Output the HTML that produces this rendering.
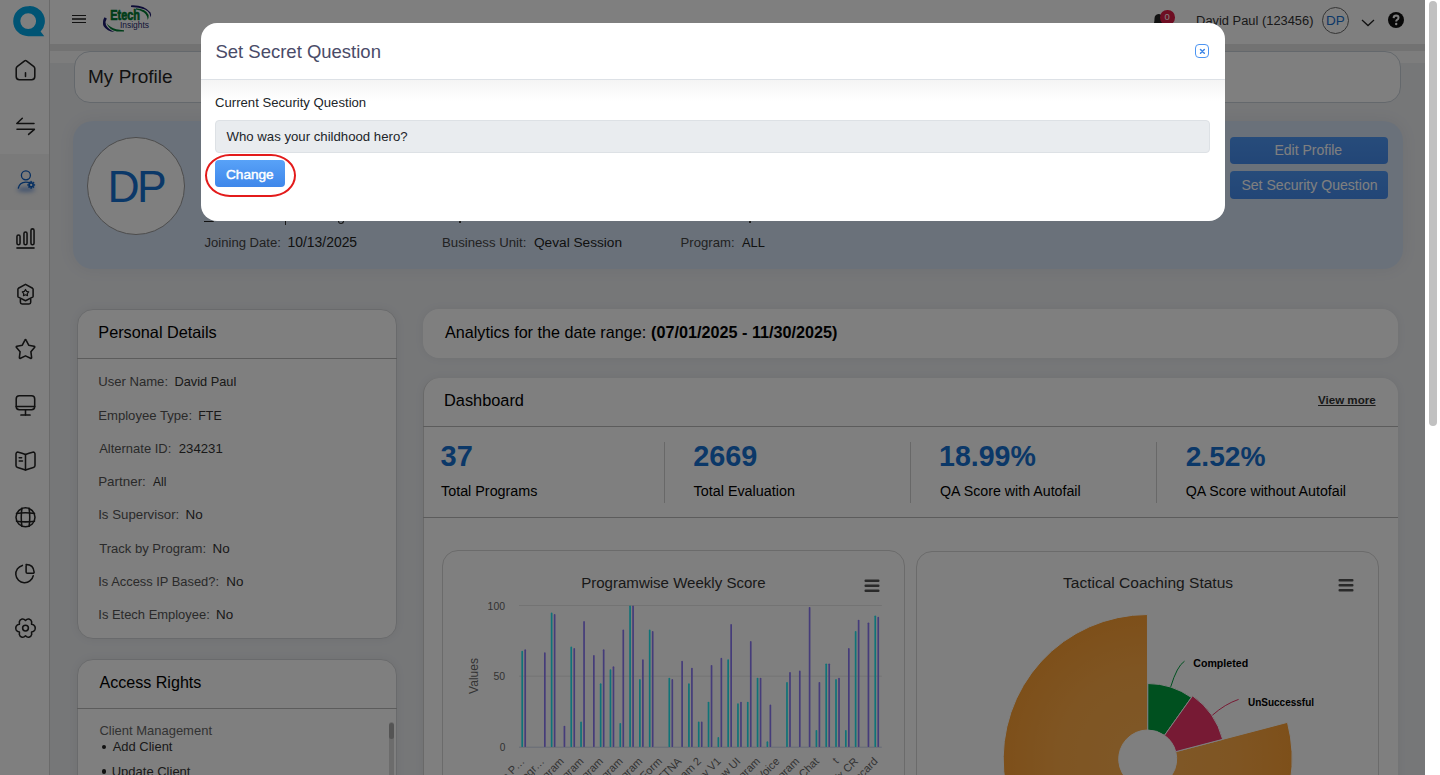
<!DOCTYPE html>
<html><head><meta charset="utf-8">
<style>
*{box-sizing:border-box;margin:0;padding:0}
html,body{width:1440px;height:775px;overflow:hidden}
body{position:relative;font-family:"Liberation Sans",sans-serif;background:#eceef1;color:#222}
.t{position:absolute;white-space:nowrap}
.a{position:absolute}
#side{position:absolute;left:0;top:0;width:50px;height:775px;background:#fff;border-right:1px solid #d4d4d4;z-index:5}
#hdr{position:absolute;left:50px;top:0;width:1375px;height:44px;background:#fff;z-index:4}
#hshadow{position:absolute;left:50px;top:44px;width:1375px;height:7px;background:#e5e5e5;z-index:3}
#band{position:absolute;left:50px;top:51px;width:1375px;height:12px;background:#fbfbfb;z-index:1}
#sb{position:absolute;left:1425px;top:0;width:15px;height:775px;background:#fff;z-index:50}
#sbthumb{position:absolute;left:1429px;top:1px;width:8px;height:425px;background:#c1c1c1;border-radius:4px;z-index:51}
.card{position:absolute;background:#fff;border-radius:16px;box-shadow:0 0 10px rgba(0,0,0,0.06);z-index:2}
.card.bd{border:1px solid #d2d6da}
#overlay{position:absolute;left:0;top:0;width:1425px;height:775px;background:rgba(0,0,0,0.5);z-index:40}
#modal{position:absolute;left:201px;top:23px;width:1024px;height:198px;background:#fff;border-radius:16px;z-index:60;overflow:hidden}
.ico{position:absolute;left:10px;width:30px;height:30px;z-index:6}
.ico *{fill:none;stroke:#222;stroke-width:1.55;stroke-linecap:round;stroke-linejoin:round}
.sep{position:absolute;width:1px;background:#d0d0d0;z-index:3}
.t{z-index:8}
</style></head><body>
<div id="side">
 <div class="a" style="left:0;top:154px;width:49px;height:56px;background:#f4f4f4"></div>
</div>
<!-- Q logo -->
<svg class="a" style="left:12px;top:5px;z-index:6" width="34" height="33" viewBox="0 0 34 33">
 <path d="M16.2 1.2 A15 15 0 1 0 16.2 31.2 L32.3 31.3 L28.6 26.6 A15 15 0 0 0 16.2 1.2 Z M16.2 8.2 A7.9 7.9 0 1 1 16.2 24.0 A7.9 7.9 0 1 1 16.2 8.2 Z" fill="#00a8e8" fill-rule="evenodd"/>
</svg>
<!-- home -->
<svg class="ico" style="top:55px" viewBox="0 0 30 30">
 <path d="M14.6 5.9 L7.4 11.3 Q6.2 12.2 6.2 13.6 V21.6 Q6.2 24.8 9.4 24.8 H21.6 Q24.8 24.8 24.8 21.6 V13.6 Q24.8 12.2 23.6 11.3 L16.4 5.9 Q15.5 5.2 14.6 5.9 Z"/>
 <path d="M15.5 17.7 V21.5"/>
</svg>
<!-- arrows -->
<svg class="ico" style="top:111px" viewBox="0 0 30 30">
 <path d="M24 12.5 H6.8 L12.3 7.2"/>
 <path d="M7 18.3 H24.4 L18.6 23.4"/>
</svg>
<!-- user gear active -->
<div class="a" style="left:17px;top:186.5px;width:18px;height:5.5px;border-radius:50%;background:rgba(20,90,200,0.5);filter:blur(2px);z-index:6"></div>
<svg class="ico" style="top:165px" viewBox="0 0 30 30">
 <circle cx="15.9" cy="10.3" r="4.5" style="stroke:#0a5cc0;stroke-width:1.3"/>
 <path d="M8.3 23.2 Q9.5 17.2 15.8 17.1 Q18.5 17.1 20.3 18" style="stroke:#0a5cc0;stroke-width:1.3"/>
 <path d="M20.49 16.27 L21.91 16.27 L21.93 17.51 L22.37 17.69 L23.27 16.83 L24.27 17.83 L23.41 18.73 L23.59 19.17 L24.83 19.19 L24.83 20.61 L23.59 20.63 L23.41 21.07 L24.27 21.97 L23.27 22.97 L22.37 22.11 L21.93 22.29 L21.91 23.53 L20.49 23.53 L20.47 22.29 L20.03 22.11 L19.13 22.97 L18.13 21.97 L18.99 21.07 L18.81 20.63 L17.57 20.61 L17.57 19.19 L18.81 19.17 L18.99 18.73 L18.13 17.83 L19.13 16.83 L20.03 17.69 L20.47 17.51 Z" style="fill:#0a5cc0;stroke:#0a5cc0;stroke-width:0.4"/>
 <circle cx="21.2" cy="19.9" r="1.15" style="fill:#f4f4f4;stroke:none"/>
</svg>
<!-- bar chart -->
<svg class="ico" style="top:224px" viewBox="0 0 30 30">
 <rect x="6.95" y="11.05" width="3.1" height="9.7" rx="1.55"/>
 <rect x="13.95" y="7.95" width="3.1" height="12.8" rx="1.55"/>
 <rect x="20.95" y="4.85" width="3.1" height="15.9" rx="1.55"/>
 <path d="M6.4 24 H24.6" style="stroke-width:1.7;stroke-linecap:butt"/>
</svg>
<!-- badge/webcam -->
<svg class="ico" style="top:279px" viewBox="0 0 30 30">
 <path d="M15.5 5.4 L22.6 9.3 Q23.1 9.6 23.1 10.2 V17.2 Q23.1 17.8 22.6 18.1 L15.5 21.8 L8.4 18.1 Q7.9 17.8 7.9 17.2 V10.2 Q7.9 9.6 8.4 9.3 Z"/>
 <path d="M10.4 20.3 V23.2 Q10.4 24.9 12.1 24.9 H19 Q20.7 24.9 20.7 23.2 V20.3"/>
 <path d="M15.50 10.50 L16.62 12.36 L18.73 12.85 L17.31 14.49 L17.50 16.65 L15.50 15.80 L13.50 16.65 L13.69 14.49 L12.27 12.85 L14.38 12.36 Z" style="stroke-width:1.2"/>
</svg>
<!-- star -->
<svg class="ico" style="top:334px" viewBox="0 0 30 30">
 <path d="M15.5 5.6 Q15.9 5.6 16.2 6.3 L18.7 11.2 L24 12.2 Q25.3 12.5 24.5 13.6 L20.9 17.7 L21.6 23.3 Q21.8 24.8 20.5 24.2 L15.5 21.9 L10.5 24.2 Q9.2 24.8 9.4 23.3 L10.1 17.7 L6.5 13.6 Q5.7 12.5 7 12.2 L12.3 11.2 L14.8 6.3 Q15.1 5.6 15.5 5.6 Z"/>
</svg>
<!-- monitor -->
<svg class="ico" style="top:390px" viewBox="0 0 30 30">
 <rect x="6.2" y="5.7" width="18.5" height="14.1" rx="3.2"/>
 <path d="M6.2 16.4 H24.7"/>
 <path d="M15.5 19.9 V24.9"/>
 <path d="M11 25 H20" style="stroke-width:1.7"/>
</svg>
<!-- book -->
<svg class="ico" style="top:446px" viewBox="0 0 30 30">
 <path d="M15.5 8.5 Q12 6.9 8.4 6.2 Q6 5.8 6 8.3 V19.6 Q6 21 7.6 21.4 Q11.8 22.4 15.5 24 Q19.2 22.4 23.4 21.4 Q25 21 25 19.6 V8.3 Q25 5.8 22.6 6.2 Q19 6.9 15.5 8.5 Z"/>
 <path d="M15.5 8.6 V23.9"/>
 <path d="M9.2 11.8 H11.6"/>
 <path d="M9.2 14.9 H12.5"/>
</svg>
<!-- globe -->
<svg class="ico" style="top:502px" viewBox="0 0 30 30">
 <circle cx="15.5" cy="15.3" r="9.5"/>
 <path d="M11.9 6.3 Q10.6 15.3 11.9 24.3"/>
 <path d="M19.1 6.3 Q20.4 15.3 19.1 24.3"/>
 <path d="M6.5 11.6 Q15.5 10 24.5 11.6"/>
 <path d="M6.5 19.2 Q15.5 20.6 24.5 19.2"/>
</svg>
<!-- pie -->
<svg class="ico" style="top:558px" viewBox="0 0 30 30">
 <path d="M12.4 7.4 A8.8 8.8 0 1 0 23.2 17.8"/>
 <path d="M16.1 6.4 Q23.6 6.4 24.1 14 Q24.2 15.3 22.8 15.3 H17.4 Q16.1 15.3 16.1 14 V7.7 Q16.1 6.4 17.1 6.4 Z"/>
</svg>
<!-- gear -->
<svg class="ico" style="top:613px" viewBox="0 0 30 30">
 <path d="M15.5 7.4 Q17.1 5.6 18.9 6 Q21.3 6.7 21.7 8.9 Q21.4 10.9 21.6 11.3 Q23.9 11.4 24.9 13.4 Q25.6 15.1 24.9 16.8 Q23.9 18.8 21.6 18.9 Q21.4 19.3 21.7 21.3 Q21.3 23.5 18.9 24.2 Q17.1 24.6 15.5 22.8 Q13.9 24.6 12.1 24.2 Q9.7 23.5 9.3 21.3 Q9.6 19.3 9.4 18.9 Q7.1 18.8 6.1 16.8 Q5.4 15.1 6.1 13.4 Q7.1 11.4 9.4 11.3 Q9.6 10.9 9.3 8.9 Q9.7 6.7 12.1 6 Q13.9 5.6 15.5 7.4 Z"/>
 <circle cx="15.5" cy="15.1" r="2.9"/>
</svg>
<div id="hdr"></div>
<div id="hshadow"></div>
<div id="band"></div>
<!-- hamburger -->
<div class="a" style="left:72px;top:14.8px;width:14px;height:1.2px;background:#222;z-index:6"></div>
<div class="a" style="left:72px;top:18.4px;width:14px;height:1.2px;background:#555;z-index:6"></div>
<div class="a" style="left:72px;top:22px;width:14px;height:1.2px;background:#222;z-index:6"></div>
<!-- Etech logo -->
<svg class="a" style="left:100px;top:3px;z-index:6" width="56" height="30" viewBox="0 0 56 30">
 <path d="M31 2.4 Q44 1.8 50.5 9.5 Q52 12 50.2 14.5 Q51 10 45 6.5 Q39 4 31 4 Z" fill="#1b1a6e"/>
 <path d="M36 5.3 Q46 6 48.6 12 Q49 15 47.5 17 Q48 13 44 9.5 Q40 7 36 6.4 Z" fill="#007a32"/>
 <path d="M4.5 14.2 Q2 18 3.5 23 Q7 28.5 14.5 29 Q8 26 6 22 Q4.8 18.5 6.8 15.5 Z" fill="#1b1a6e"/>
 <path d="M6.5 20 Q9 27 17 28.6 L24 28.6 L24 27.2 Q15 26.8 11 24 Q8 22.5 6.5 20 Z" fill="#007a32"/>
 <text x="10.2" y="17.4" font-family="Liberation Sans" font-weight="700" font-size="14" fill="#007a32" stroke="#007a32" stroke-width="0.7" textLength="29.8" lengthAdjust="spacingAndGlyphs">Etech</text>
 <text x="20" y="25" font-family="Liberation Sans" font-size="8.2" fill="#26266e" textLength="29" lengthAdjust="spacingAndGlyphs">Insights</text>
</svg>
<!-- bell + badge -->
<svg class="a" style="left:1151px;top:10px;z-index:6" width="16" height="16" viewBox="0 0 16 16">
 <path d="M3 13 Q3.5 11.5 3.5 8.5 Q3.5 4.5 7.5 4 Q11 4.2 11.5 8.5 Q11.5 11.5 12 13 Z" fill="#222"/>
 <circle cx="7.5" cy="14.3" r="1.4" fill="#222"/>
</svg>
<div class="a" style="left:1160px;top:10px;width:14.5px;height:14.5px;border-radius:50%;background:#dc1c46;z-index:7"></div>
<div class="t" style="left:1160px;top:10.5px;width:14.5px;text-align:center;font-size:9.5px;line-height:11px;color:#fff;z-index:8">0</div>
<!-- avatar -->
<div class="a" style="left:1322px;top:7px;width:27px;height:27px;border-radius:50%;border:1px solid #6a6a6a;z-index:6"></div>
<!-- chevron -->
<svg class="a" style="left:1361px;top:15px;z-index:6" width="14" height="12" viewBox="0 0 14 12">
 <path d="M1 5 L7 10.5 L13 5" fill="none" stroke="#222" stroke-width="1.3"/>
</svg>
<!-- help -->
<svg class="a" style="left:1388px;top:12px;z-index:6" width="16" height="16" viewBox="0 0 16 16">
 <circle cx="8" cy="8" r="8" fill="#111"/>
 <path d="M5.6 6.1 Q5.7 3.6 8.1 3.6 Q10.5 3.7 10.5 5.8 Q10.5 7.2 9 7.9 Q8.2 8.3 8.2 9.4" fill="none" stroke="#fff" stroke-width="2"/>
 <circle cx="8.2" cy="12" r="1.2" fill="#fff"/>
</svg>
<!-- my profile card -->
<div class="card bd" style="left:74px;top:51px;width:1327px;height:51.5px;box-shadow:none;border-color:#c8d0d8"></div>
<!-- profile card -->
<div class="card" style="left:73px;top:121px;width:1329.5px;height:147.5px;border-radius:20px;background:#d5e2f5;box-shadow:0 0 16px rgba(20,40,80,0.07)"></div>
<div class="a" style="left:87.4px;top:137.4px;width:98px;height:98px;border-radius:50%;background:#fff;border:1px solid #999;z-index:3"></div>
<!-- hidden name line peeking under modal -->
<div class="a" style="left:204px;top:220.5px;width:10px;height:1.6px;background:#222;border-radius:0 0 4px 0;z-index:3"></div>
<div class="a" style="left:284.5px;top:220.5px;width:1.6px;height:4px;background:#333;z-index:3"></div>
<div class="a" style="left:338px;top:220.5px;width:6px;height:3px;border:1.5px solid #333;border-top:none;border-radius:0 0 3px 3px;z-index:3"></div>
<div class="a" style="left:459px;top:220.5px;width:1.5px;height:2px;background:#444;z-index:3"></div>
<div class="a" style="left:749px;top:220.5px;width:1.5px;height:2px;background:#444;z-index:3"></div>
<!-- buttons -->
<div class="a" style="left:1230px;top:137px;width:158px;height:27px;border-radius:4px;background:linear-gradient(#4e98f6,#458cee);z-index:3"></div>
<div class="a" style="left:1230px;top:171px;width:158px;height:28px;border-radius:4px;background:linear-gradient(#4e98f6,#458cee);z-index:3"></div>
<!-- personal details -->
<div class="card" style="left:77px;top:308.7px;width:319.5px;height:330.3px;border:1px solid #d3d5d8"></div>
<div class="a" style="left:77px;top:357.5px;width:319.5px;height:1px;background:#b9b9b9;z-index:3"></div>
<!-- access rights -->
<div class="card" style="left:77px;top:659px;width:319.5px;height:200px;border:1px solid #d3d5d8"></div>
<div class="a" style="left:77px;top:708px;width:319.5px;height:1px;background:#b9b9b9;z-index:3"></div>
<div class="a" style="left:389px;top:722px;width:5px;height:60px;border-radius:3px;background:#d8d8d8;z-index:3"></div>
<div class="a" style="left:389px;top:723px;width:5px;height:16px;border-radius:3px;background:#a9a9a9;z-index:3"></div>
<div class="a" style="left:101.5px;top:744.5px;width:4.5px;height:4.5px;border-radius:50%;background:#222;z-index:3"></div>
<div class="a" style="left:101.5px;top:769px;width:4.5px;height:4.5px;border-radius:50%;background:#222;z-index:3"></div>
<!-- analytics -->
<div class="card" style="left:423.4px;top:309px;width:974.6px;height:49px"></div>
<!-- dashboard -->
<div class="card" style="left:423px;top:377.7px;width:975px;height:500px;border-left:1px solid #d2d2d2"></div>
<div class="a" style="left:423px;top:425.6px;width:975px;height:1px;background:#b9b9b9;z-index:3"></div>
<div class="a" style="left:423px;top:516.8px;width:975px;height:1px;background:#b9b9b9;z-index:3"></div>
<div class="sep" style="left:664.3px;top:441.8px;height:61px"></div>
<div class="sep" style="left:910.2px;top:441.8px;height:61px"></div>
<div class="sep" style="left:1156.1px;top:441.8px;height:61px"></div>
<!-- chart cards -->
<div class="card bd" style="left:442px;top:550.4px;width:463.4px;height:300px;box-shadow:none;border-color:#d6d6d6"></div>
<div class="card bd" style="left:915.7px;top:550.6px;width:463.5px;height:300px;box-shadow:none;border-color:#d6d6d6"></div>
<svg class="a" style="left:0;top:0;z-index:3" width="1440" height="775" viewBox="0 0 1440 775">
<path d="M519.0 605.5 H881.8" stroke="#e6e6e6" stroke-width="1"/>
<path d="M519.0 676.2 H881.8" stroke="#e6e6e6" stroke-width="1"/>
<path d="M519.0 747.2 H881.8" stroke="#ccd6eb" stroke-width="1"/>
<rect x="521.36" y="650.78" width="1.7" height="96.22" rx="0.85" fill="#1ee6f0"/>
<rect x="524.36" y="649.37" width="1.7" height="97.64" rx="0.85" fill="#8a78f4"/>
<rect x="543.98" y="652.19" width="1.7" height="94.81" rx="0.85" fill="#8a78f4"/>
<rect x="550.78" y="612.58" width="1.7" height="134.43" rx="0.85" fill="#1ee6f0"/>
<rect x="553.78" y="613.99" width="1.7" height="133.01" rx="0.85" fill="#8a78f4"/>
<rect x="563.59" y="725.77" width="1.7" height="21.23" rx="0.85" fill="#8a78f4"/>
<rect x="570.40" y="646.53" width="1.7" height="100.47" rx="0.85" fill="#1ee6f0"/>
<rect x="573.40" y="647.95" width="1.7" height="99.05" rx="0.85" fill="#8a78f4"/>
<rect x="580.20" y="721.53" width="1.7" height="25.47" rx="0.85" fill="#1ee6f0"/>
<rect x="583.20" y="621.07" width="1.7" height="125.94" rx="0.85" fill="#8a78f4"/>
<rect x="593.01" y="655.02" width="1.7" height="91.98" rx="0.85" fill="#8a78f4"/>
<rect x="599.82" y="683.33" width="1.7" height="63.68" rx="0.85" fill="#1ee6f0"/>
<rect x="602.82" y="649.37" width="1.7" height="97.64" rx="0.85" fill="#8a78f4"/>
<rect x="609.62" y="669.17" width="1.7" height="77.83" rx="0.85" fill="#1ee6f0"/>
<rect x="612.62" y="666.35" width="1.7" height="80.66" rx="0.85" fill="#8a78f4"/>
<rect x="619.43" y="722.95" width="1.7" height="24.05" rx="0.85" fill="#1ee6f0"/>
<rect x="622.43" y="629.55" width="1.7" height="117.45" rx="0.85" fill="#8a78f4"/>
<rect x="629.23" y="605.50" width="1.7" height="141.50" rx="0.85" fill="#1ee6f0"/>
<rect x="632.23" y="605.50" width="1.7" height="141.50" rx="0.85" fill="#8a78f4"/>
<rect x="639.04" y="679.08" width="1.7" height="67.92" rx="0.85" fill="#1ee6f0"/>
<rect x="642.04" y="659.27" width="1.7" height="87.73" rx="0.85" fill="#8a78f4"/>
<rect x="648.85" y="629.55" width="1.7" height="117.45" rx="0.85" fill="#1ee6f0"/>
<rect x="651.85" y="630.97" width="1.7" height="116.03" rx="0.85" fill="#8a78f4"/>
<rect x="668.46" y="677.66" width="1.7" height="69.34" rx="0.85" fill="#1ee6f0"/>
<rect x="671.46" y="679.08" width="1.7" height="67.92" rx="0.85" fill="#8a78f4"/>
<rect x="681.27" y="660.68" width="1.7" height="86.31" rx="0.85" fill="#8a78f4"/>
<rect x="688.07" y="683.33" width="1.7" height="63.68" rx="0.85" fill="#1ee6f0"/>
<rect x="691.07" y="667.76" width="1.7" height="79.24" rx="0.85" fill="#8a78f4"/>
<rect x="697.88" y="721.53" width="1.7" height="25.47" rx="0.85" fill="#1ee6f0"/>
<rect x="700.88" y="721.53" width="1.7" height="25.47" rx="0.85" fill="#8a78f4"/>
<rect x="707.69" y="701.72" width="1.7" height="45.28" rx="0.85" fill="#1ee6f0"/>
<rect x="710.69" y="664.93" width="1.7" height="82.07" rx="0.85" fill="#8a78f4"/>
<rect x="717.49" y="737.10" width="1.7" height="9.91" rx="0.85" fill="#1ee6f0"/>
<rect x="720.49" y="657.86" width="1.7" height="89.14" rx="0.85" fill="#8a78f4"/>
<rect x="727.30" y="659.27" width="1.7" height="87.73" rx="0.85" fill="#1ee6f0"/>
<rect x="730.30" y="623.89" width="1.7" height="123.11" rx="0.85" fill="#8a78f4"/>
<rect x="737.11" y="703.13" width="1.7" height="43.87" rx="0.85" fill="#1ee6f0"/>
<rect x="740.11" y="701.72" width="1.7" height="45.28" rx="0.85" fill="#8a78f4"/>
<rect x="746.91" y="701.72" width="1.7" height="45.28" rx="0.85" fill="#1ee6f0"/>
<rect x="749.91" y="640.88" width="1.7" height="106.12" rx="0.85" fill="#8a78f4"/>
<rect x="756.72" y="677.66" width="1.7" height="69.34" rx="0.85" fill="#1ee6f0"/>
<rect x="759.72" y="677.66" width="1.7" height="69.34" rx="0.85" fill="#8a78f4"/>
<rect x="766.53" y="741.34" width="1.7" height="5.66" rx="0.85" fill="#1ee6f0"/>
<rect x="769.53" y="704.55" width="1.7" height="42.45" rx="0.85" fill="#8a78f4"/>
<rect x="786.14" y="681.91" width="1.7" height="65.09" rx="0.85" fill="#1ee6f0"/>
<rect x="789.14" y="672.00" width="1.7" height="75.00" rx="0.85" fill="#8a78f4"/>
<rect x="798.94" y="670.59" width="1.7" height="76.41" rx="0.85" fill="#8a78f4"/>
<rect x="808.75" y="606.91" width="1.7" height="140.09" rx="0.85" fill="#8a78f4"/>
<rect x="815.56" y="730.02" width="1.7" height="16.98" rx="0.85" fill="#1ee6f0"/>
<rect x="818.56" y="681.91" width="1.7" height="65.09" rx="0.85" fill="#8a78f4"/>
<rect x="825.36" y="663.51" width="1.7" height="83.48" rx="0.85" fill="#1ee6f0"/>
<rect x="828.36" y="663.51" width="1.7" height="83.48" rx="0.85" fill="#8a78f4"/>
<rect x="835.17" y="679.08" width="1.7" height="67.92" rx="0.85" fill="#1ee6f0"/>
<rect x="838.17" y="677.66" width="1.7" height="69.34" rx="0.85" fill="#8a78f4"/>
<rect x="844.98" y="730.02" width="1.7" height="16.98" rx="0.85" fill="#1ee6f0"/>
<rect x="847.98" y="647.95" width="1.7" height="99.05" rx="0.85" fill="#8a78f4"/>
<rect x="854.78" y="630.97" width="1.7" height="116.03" rx="0.85" fill="#1ee6f0"/>
<rect x="857.78" y="619.65" width="1.7" height="127.35" rx="0.85" fill="#8a78f4"/>
<rect x="867.59" y="622.48" width="1.7" height="124.52" rx="0.85" fill="#8a78f4"/>
<rect x="874.40" y="615.40" width="1.7" height="131.59" rx="0.85" fill="#1ee6f0"/>
<rect x="877.40" y="616.82" width="1.7" height="130.18" rx="0.85" fill="#8a78f4"/>
<text x="525.4" y="762" transform="rotate(-45 525.4 762)" text-anchor="end" font-family="Liberation Sans" font-size="11" fill="#666">Sample P…</text>
<text x="545.0" y="762" transform="rotate(-45 545.0 762)" text-anchor="end" font-family="Liberation Sans" font-size="11" fill="#666">Progr…</text>
<text x="564.6" y="762" transform="rotate(-45 564.6 762)" text-anchor="end" font-family="Liberation Sans" font-size="11" fill="#666">Program</text>
<text x="584.2" y="762" transform="rotate(-45 584.2 762)" text-anchor="end" font-family="Liberation Sans" font-size="11" fill="#666">Program</text>
<text x="603.8" y="762" transform="rotate(-45 603.8 762)" text-anchor="end" font-family="Liberation Sans" font-size="11" fill="#666">Program</text>
<text x="623.4" y="762" transform="rotate(-45 623.4 762)" text-anchor="end" font-family="Liberation Sans" font-size="11" fill="#666">Program</text>
<text x="643.0" y="762" transform="rotate(-45 643.0 762)" text-anchor="end" font-family="Liberation Sans" font-size="11" fill="#666">Program</text>
<text x="662.7" y="762" transform="rotate(-45 662.7 762)" text-anchor="end" font-family="Liberation Sans" font-size="11" fill="#666">Form</text>
<text x="682.3" y="762" transform="rotate(-45 682.3 762)" text-anchor="end" font-family="Liberation Sans" font-size="11" fill="#666">ETTNA</text>
<text x="701.9" y="762" transform="rotate(-45 701.9 762)" text-anchor="end" font-family="Liberation Sans" font-size="11" fill="#666">Program 2</text>
<text x="721.5" y="762" transform="rotate(-45 721.5 762)" text-anchor="end" font-family="Liberation Sans" font-size="11" fill="#666">Survey V1</text>
<text x="741.1" y="762" transform="rotate(-45 741.1 762)" text-anchor="end" font-family="Liberation Sans" font-size="11" fill="#666">New UI</text>
<text x="760.7" y="762" transform="rotate(-45 760.7 762)" text-anchor="end" font-family="Liberation Sans" font-size="11" fill="#666">Program</text>
<text x="780.3" y="762" transform="rotate(-45 780.3 762)" text-anchor="end" font-family="Liberation Sans" font-size="11" fill="#666">Voice</text>
<text x="799.9" y="762" transform="rotate(-45 799.9 762)" text-anchor="end" font-family="Liberation Sans" font-size="11" fill="#666">Program</text>
<text x="819.6" y="762" transform="rotate(-45 819.6 762)" text-anchor="end" font-family="Liberation Sans" font-size="11" fill="#666">Chat</text>
<text x="839.2" y="762" transform="rotate(-45 839.2 762)" text-anchor="end" font-family="Liberation Sans" font-size="11" fill="#666">t</text>
<text x="858.8" y="762" transform="rotate(-45 858.8 762)" text-anchor="end" font-family="Liberation Sans" font-size="11" fill="#666">Tx CR</text>
<text x="878.4" y="762" transform="rotate(-45 878.4 762)" text-anchor="end" font-family="Liberation Sans" font-size="11" fill="#666">Scorecard</text>
<text x="477.5" y="676" transform="rotate(-90 477.5 676)" text-anchor="middle" font-family="Liberation Sans" font-size="12" fill="#666">Values</text>
<rect x="864.5" y="579.5" width="15" height="2.6" rx="1" fill="#555"/>
<rect x="864.5" y="584.5" width="15" height="2.6" rx="1" fill="#555"/>
<rect x="864.5" y="589.5" width="15" height="2.6" rx="1" fill="#555"/>
<rect x="1338.5" y="579.0" width="15" height="2.6" rx="1" fill="#555"/>
<rect x="1338.5" y="584.0" width="15" height="2.6" rx="1" fill="#555"/>
<rect x="1338.5" y="589.0" width="15" height="2.6" rx="1" fill="#555"/>
<defs><radialGradient id="og" gradientUnits="userSpaceOnUse" cx="1147.7" cy="759" r="145"><stop offset="0" stop-color="#ffb050"/><stop offset="0.6" stop-color="#ffab46"/><stop offset="1" stop-color="#fb9f34"/></radialGradient></defs>
<path d="M1287.47 722.33 A144.5 144.5 0 1 1 1147.45 614.50 L1147.65 730.00 A29 29 0 1 0 1175.75 751.64 Z" fill="url(#og)" stroke="#fff" stroke-width="1"/>
<path d="M1147.83 683.50 A75.5 75.5 0 0 1 1191.44 697.46 L1164.50 735.36 A29 29 0 0 0 1147.75 730.00 Z" fill="#00a03e" stroke="#fff" stroke-width="1"/>
<path d="M1192.59 695.83 A77.5 77.5 0 0 1 1222.66 739.33 L1175.75 751.64 A29 29 0 0 0 1164.50 735.36 Z" fill="#ee3468" stroke="#fff" stroke-width="1"/>
<path d="M1170.7 686.9 Q1177 666 1184.5 661.2" fill="none" stroke="#00a03e" stroke-width="1"/>
<path d="M1212.4 715.2 Q1225 704 1238.6 699.4" fill="none" stroke="#ee3468" stroke-width="1"/>
</svg>
<div class="t" id="t_user" style="left:1196.1px;top:15.01px;font-size:12.89px;line-height:12.89px;color:#333;">David Paul (123456)</div>
<div class="t" id="t_hdp" style="left:1285.5px;width:100px;text-align:center;top:14.01px;font-size:13.50px;line-height:13.50px;color:#1670d0;">DP</div>
<div class="t" id="t_dp" style="left:107.4px;top:164.85px;font-size:44.50px;line-height:44.50px;color:#1670d0;letter-spacing:-2.42px;">DP</div>
<div class="t" id="t_jd_l" style="left:204.5px;top:235.92px;font-size:13.09px;line-height:13.09px;color:#444;">Joining Date:</div>
<div class="t" id="t_jd_v" style="left:287.5px;top:236.01px;font-size:13.92px;line-height:13.92px;color:#222;">10/13/2025</div>
<div class="t" id="t_bu_l" style="left:442.0px;top:235.83px;font-size:13.19px;line-height:13.19px;color:#444;">Business Unit:</div>
<div class="t" id="t_bu_v" style="left:534.0px;top:236.00px;font-size:13.66px;line-height:13.66px;color:#222;">Qeval Session</div>
<div class="t" id="t_pg_l" style="left:680.6px;top:235.88px;font-size:13.14px;line-height:13.14px;color:#444;">Program:</div>
<div class="t" id="t_pg_v" style="left:742.0px;top:237.01px;font-size:12.82px;line-height:12.82px;color:#222;">ALL</div>
<div class="t" id="t_btn1" style="left:1274.4px;top:143.13px;font-size:14.02px;line-height:14.02px;color:#fff;">Edit Profile</div>
<div class="t" id="t_btn2" style="left:1241.4px;top:178.08px;font-size:14.08px;line-height:14.08px;color:#fff;">Set Security Question</div>
<div class="t" id="t_pd" style="left:98.3px;top:324.23px;font-size:16.27px;line-height:16.27px;color:#000;">Personal Details</div>
<div class="t" id="t_r1l" style="left:98.2px;top:375.16px;font-size:13.10px;line-height:13.10px;color:#555;">User Name:</div>
<div class="t" id="t_r1v" style="left:174.5px;top:376.01px;font-size:12.79px;line-height:12.79px;color:#333;">David Paul</div>
<div class="t" id="t_r2l" style="left:98.2px;top:409.01px;font-size:13.13px;line-height:13.13px;color:#555;">Employee Type:</div>
<div class="t" id="t_r2v" style="left:198.3px;top:410.01px;font-size:12.38px;line-height:12.38px;color:#333;">FTE</div>
<div class="t" id="t_r3l" style="left:99.2px;top:443.01px;font-size:12.97px;line-height:12.97px;color:#555;">Alternate ID:</div>
<div class="t" id="t_r3v" style="left:178.8px;top:441.84px;font-size:13.18px;line-height:13.18px;color:#333;">234231</div>
<div class="t" id="t_r4l" style="left:98.2px;top:474.76px;font-size:13.40px;line-height:13.40px;color:#555;">Partner:</div>
<div class="t" id="t_r4v" style="left:153.0px;top:477.00px;font-size:11.97px;line-height:11.97px;color:#333;">All</div>
<div class="t" id="t_r5l" style="left:98.2px;top:507.86px;font-size:13.27px;line-height:13.27px;color:#555;">Is Supervisor:</div>
<div class="t" id="t_r5v" style="left:185.6px;top:507.73px;font-size:13.43px;line-height:13.43px;color:#333;">No</div>
<div class="t" id="t_r6l" style="left:99.2px;top:542.01px;font-size:13.06px;line-height:13.06px;color:#555;">Track by Program:</div>
<div class="t" id="t_r6v" style="left:212.5px;top:542.01px;font-size:13.43px;line-height:13.43px;color:#333;">No</div>
<div class="t" id="t_r7l" style="left:98.3px;top:576.01px;font-size:12.88px;line-height:12.88px;color:#555;">Is Access IP Based?:</div>
<div class="t" id="t_r7v" style="left:226.3px;top:575.01px;font-size:13.43px;line-height:13.43px;color:#333;">No</div>
<div class="t" id="t_r8l" style="left:98.3px;top:609.02px;font-size:12.95px;line-height:12.95px;color:#555;">Is Etech Employee:</div>
<div class="t" id="t_r8v" style="left:216.0px;top:608.00px;font-size:13.43px;line-height:13.43px;color:#333;">No</div>
<div class="t" id="t_ar" style="left:99.4px;top:674.01px;font-size:16.10px;line-height:16.10px;color:#000;">Access Rights</div>
<div class="t" id="t_cm" style="left:99.4px;top:724.30px;font-size:12.99px;line-height:12.99px;color:#666;">Client Management</div>
<div class="t" id="t_ac" style="left:112.7px;top:741.01px;font-size:12.96px;line-height:12.96px;color:#333;">Add Client</div>
<div class="t" id="t_uc" style="left:111.7px;top:765.01px;font-size:13.00px;line-height:13.00px;color:#333;">Update Client</div>
<div class="t" id="t_an" style="left:445.0px;top:324.01px;font-size:16.16px;line-height:16.16px;color:#000;">Analytics for the date range:</div>
<div class="t" id="t_anb" style="left:651.0px;top:324.27px;font-size:16.22px;line-height:16.22px;color:#000;font-weight:700;">(07/01/2025 - 11/30/2025)</div>
<div class="t" id="t_dash" style="left:444.0px;top:392.01px;font-size:16.35px;line-height:16.35px;color:#000;">Dashboard</div>
<div class="t" id="t_vm" style="left:1318.0px;top:395.01px;font-size:11.57px;line-height:11.57px;color:#333;font-weight:700;text-decoration:underline;">View more</div>
<div class="t" id="t_n1" style="left:440.5px;top:442.00px;font-size:29.03px;line-height:29.03px;color:#1670d0;font-weight:700;">37</div>
<div class="t" id="t_l1" style="left:441.0px;top:484.25px;font-size:14.35px;line-height:14.35px;color:#000;">Total Programs</div>
<div class="t" id="t_n2" style="left:693.2px;top:442.01px;font-size:28.85px;line-height:28.85px;color:#1670d0;font-weight:700;">2669</div>
<div class="t" id="t_l2" style="left:693.6px;top:484.25px;font-size:14.35px;line-height:14.35px;color:#000;">Total Evaluation</div>
<div class="t" id="t_n3" style="left:939.0px;top:442.00px;font-size:28.57px;line-height:28.57px;color:#1670d0;font-weight:700;">18.99%</div>
<div class="t" id="t_l3" style="left:940.0px;top:484.00px;font-size:14.23px;line-height:14.23px;color:#000;">QA Score with Autofail</div>
<div class="t" id="t_n4" style="left:1185.7px;top:441.74px;font-size:28.18px;line-height:28.18px;color:#1670d0;font-weight:700;">2.52%</div>
<div class="t" id="t_l4" style="left:1185.7px;top:484.01px;font-size:14.21px;line-height:14.21px;color:#000;">QA Score without Autofail</div>
<div class="t" id="t_c1" style="left:581.2px;top:575.25px;font-size:15.06px;line-height:15.06px;color:#333;">Programwise Weekly Score</div>
<div class="t" id="t_c2" style="left:1063.0px;top:574.95px;font-size:15.54px;line-height:15.54px;color:#333;">Tactical Coaching Status</div>
<div class="t" id="t_y100" style="left:405.0px;width:100px;text-align:right;top:602.01px;font-size:10.44px;line-height:10.44px;color:#666;">100</div>
<div class="t" id="t_y50" style="left:405.0px;width:100px;text-align:right;top:672.00px;font-size:10.44px;line-height:10.44px;color:#666;">50</div>
<div class="t" id="t_y0" style="left:405.0px;width:100px;text-align:right;top:743.01px;font-size:10.12px;line-height:10.12px;color:#666;letter-spacing:-0.32px;">0</div>
<div class="t" id="t_comp" style="left:1193.3px;top:658.00px;font-size:10.62px;line-height:10.62px;color:#000;font-weight:700;">Completed</div>
<div class="t" id="t_unsu" style="left:1248.0px;top:698.01px;font-size:9.99px;line-height:9.99px;color:#000;font-weight:700;">UnSuccessful</div>
<div id="overlay"></div>
<div id="sb"></div><div id="sbthumb"></div>
<div id="modal">
 <div class="a" style="left:0;top:56px;width:1024px;height:1px;background:#dde1e6"></div>
 <div class="a" style="left:0;top:57px;width:1024px;height:22px;background:linear-gradient(rgba(0,0,0,0.045),rgba(0,0,0,0))"></div>
</div>
<!-- close icon -->
<div class="a" style="left:1194.8px;top:43.6px;width:14.6px;height:14.5px;border:1.7px solid #4d95f2;border-radius:4px;z-index:70"></div>
<svg class="a" style="left:1194.8px;top:43.6px;z-index:71" width="15" height="15" viewBox="0 0 15 15">
 <path d="M5.5 5.5 L9.3 9.3 M9.3 5.5 L5.5 9.3" stroke="#3a84e6" stroke-width="1.5" stroke-linecap="round"/>
</svg>
<!-- input -->
<div class="a" style="left:215px;top:120px;width:995px;height:33px;background:#e9ecef;border:1px solid #dde1e5;border-radius:4px;z-index:65"></div>
<!-- change button -->
<div class="a" style="left:215px;top:160px;width:70px;height:27px;border-radius:4px;background:linear-gradient(#58a2f8,#3f87ea);z-index:65"></div>
<!-- red ellipse -->
<div class="a" style="left:205px;top:154px;width:91px;height:43px;border:2.4px solid #e31b1b;border-radius:25px/21.5px;z-index:66"></div>

<div class="t" id="t_myprof" style="left:88.0px;top:66.89px;font-size:19.02px;line-height:19.02px;color:#111;z-index:70;">My Profile</div>
<div class="t" id="t_mt" style="left:215.4px;top:43.00px;font-size:18.51px;line-height:18.51px;color:#4a4b68;z-index:70;">Set Secret Question</div>
<div class="t" id="t_ml" style="left:215.0px;top:96.16px;font-size:13.15px;line-height:13.15px;color:#212529;z-index:70;">Current Security Question</div>
<div class="t" id="t_mi" style="left:226.5px;top:130.01px;font-size:13.19px;line-height:13.19px;color:#212529;z-index:70;">Who was your childhood hero?</div>
<div class="t" id="t_chg" style="left:226.0px;top:168.00px;font-size:13.61px;line-height:13.61px;color:#fff;-webkit-text-stroke:0.45px #fff;z-index:70;">Change</div>
</body></html>
